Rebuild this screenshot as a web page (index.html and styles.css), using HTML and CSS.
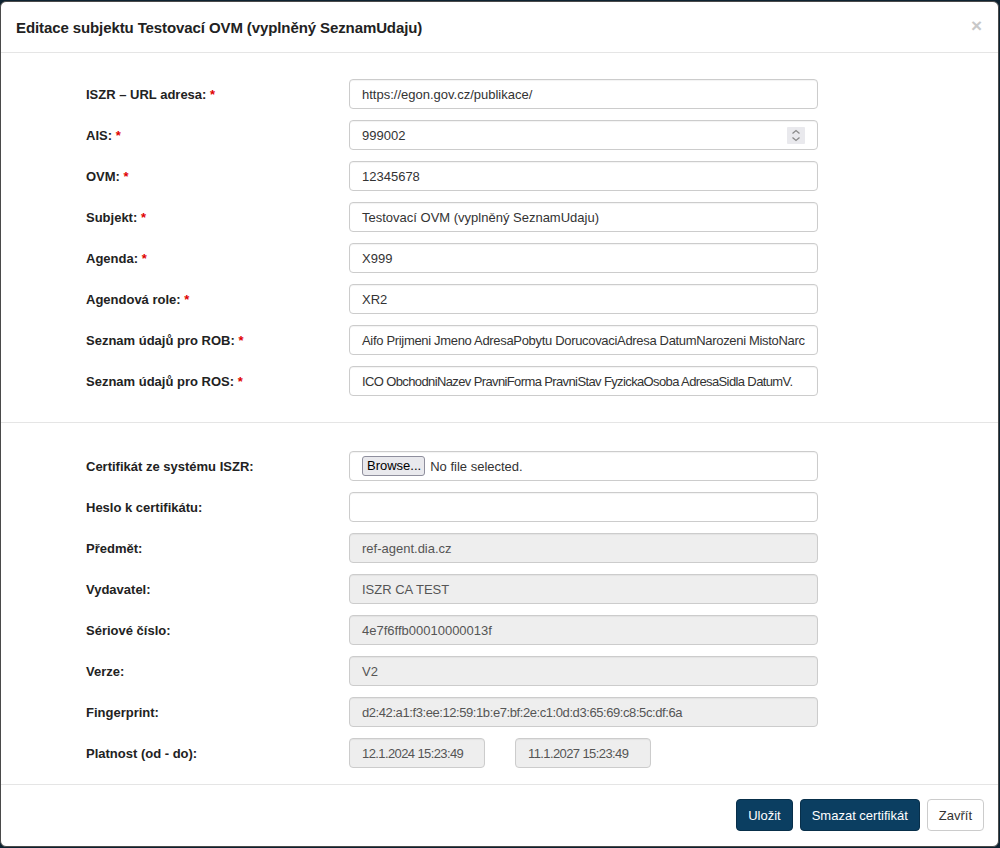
FILE: index.html
```html
<!DOCTYPE html>
<html lang="cs">
<head>
<meta charset="utf-8">
<title>Editace subjektu</title>
<link rel="stylesheet" href="styles.css">
</head>
<body>
<div class="modal">
  <div class="modal-header">
    <h4 class="modal-title">Editace subjektu Testovací OVM (vyplněný SeznamUdaju)</h4>
    <span class="close">×</span>
  </div>
  <div class="section section-main">
    <div class="form-grid">
      <label class="lbl">ISZR – URL adresa: <span class="req">*</span></label>
      <div class="inp">https://egon.gov.cz/publikace/</div>

      <label class="lbl">AIS: <span class="req">*</span></label>
      <div class="inp inp-number">
        <span class="val">999002</span>
        <span class="spin">
          <svg width="18" height="17" viewBox="0 0 18 17"><path d="M5.5 6.5 9 3.5 12.5 6.5" fill="none" stroke="#8a8a8a" stroke-width="1.3"/><path d="M5.5 10.5 9 13.5 12.5 10.5" fill="none" stroke="#8a8a8a" stroke-width="1.3"/></svg>
        </span>
      </div>

      <label class="lbl">OVM: <span class="req">*</span></label>
      <div class="inp">12345678</div>

      <label class="lbl">Subjekt: <span class="req">*</span></label>
      <div class="inp">Testovací OVM (vyplněný SeznamUdaju)</div>

      <label class="lbl">Agenda: <span class="req">*</span></label>
      <div class="inp">X999</div>

      <label class="lbl">Agendová role: <span class="req">*</span></label>
      <div class="inp">XR2</div>

      <label class="lbl">Seznam údajů pro ROB: <span class="req">*</span></label>
      <div class="inp"><span class="clip clip-rob">Aifo Prijmeni Jmeno AdresaPobytu DorucovaciAdresa DatumNarozeni MistoNarc</span></div>

      <label class="lbl">Seznam údajů pro ROS: <span class="req">*</span></label>
      <div class="inp"><span class="clip clip-ros">ICO ObchodniNazev PravniForma PravniStav FyzickaOsoba AdresaSidla DatumV.</span></div>
    </div>
  </div>
  <div class="section section-cert">
    <div class="form-grid">
      <label class="lbl">Certifikát ze systému ISZR:</label>
      <div class="inp inp-file"><span class="browse">Browse...</span><span class="nofile">No file selected.</span></div>

      <label class="lbl">Heslo k certifikátu:</label>
      <div class="inp"></div>

      <label class="lbl">Předmět:</label>
      <div class="inp ro">ref-agent.dia.cz</div>

      <label class="lbl">Vydavatel:</label>
      <div class="inp ro">ISZR CA TEST</div>

      <label class="lbl">Sériové číslo:</label>
      <div class="inp ro">4e7f6ffb00010000013f</div>

      <label class="lbl">Verze:</label>
      <div class="inp ro">V2</div>

      <label class="lbl">Fingerprint:</label>
      <div class="inp ro tight">d2:42:a1:f3:ee:12:59:1b:e7:bf:2e:c1:0d:d3:65:69:c8:5c:df:6a</div>

      <label class="lbl">Platnost (od - do):</label>
      <div class="pair">
        <div class="inp ro short tighter">12.1.2024 15:23:49</div>
        <div class="inp ro short tighter">11.1.2027 15:23:49</div>
      </div>
    </div>
  </div>
  <div class="modal-footer">
    <button class="btn btn-primary">Uložit</button>
    <button class="btn btn-primary">Smazat certifikát</button>
    <button class="btn btn-default">Zavřít</button>
  </div>
</div>
</body>
</html>
```

FILE: styles.css
```css
html, body {
  margin: 0;
  padding: 0;
}
body {
  background: #0d2230;
  font-family: "Liberation Sans", Arial, sans-serif;
  font-size: 13px;
  color: #333;
  padding-top: 1px;
  height: 848px;
  box-sizing: border-box;
  overflow: hidden;
}
.modal {
  width: 999px;
  height: 846px;
  box-sizing: border-box;
  background: #fff;
  border: 1px solid #4a4a4a;
  border-radius: 6px;
  display: flex;
  flex-direction: column;
}
.modal-header {
  height: 50px;
  border-bottom: 1px solid #e5e5e5;
  display: flex;
  align-items: center;
  justify-content: space-between;
  padding: 0 16px 0 15px;
}
.modal-title {
  margin: 0;
  font-size: 15px;
  font-weight: bold;
  color: #222;
  letter-spacing: -0.1px;
}
.close {
  font-size: 19px;
  font-weight: bold;
  color: #c8c8c8;
  line-height: 1;
  margin-top: -4px;
}
.section {
  padding-left: 85px;
}
.section-main {
  padding-top: 26px;
  padding-bottom: 26px;
  border-bottom: 1px solid #e5e5e5;
}
.section-cert {
  padding-top: 28px;
  padding-bottom: 16px;
  border-bottom: 1px solid #e5e5e5;
}
.form-grid {
  display: grid;
  grid-template-columns: 263px 469px;
  row-gap: 11px;
  align-items: center;
}
.lbl {
  font-weight: bold;
  color: #222;
  font-size: 13px;
}
.req {
  color: #e00000;
}
.inp {
  height: 30px;
  box-sizing: border-box;
  border: 1px solid #ccc;
  border-radius: 4px;
  padding: 0 12px;
  display: flex;
  align-items: center;
  color: #333;
  font-size: 13px;
  white-space: nowrap;
  overflow: hidden;
  box-shadow: inset 0 1px 1px rgba(0,0,0,0.05);
}
.clip {
  white-space: nowrap;
  display: block;
}
.clip-rob {
  letter-spacing: -0.32px;
}
.clip-ros {
  letter-spacing: -0.62px;
}
.tight {
  letter-spacing: -0.42px;
}
.tighter {
  letter-spacing: -0.6px;
}
.inp-number {
  justify-content: space-between;
  padding-right: 12px;
}
.spin {
  width: 18px;
  height: 17px;
  background: #e9e9ed;
  display: flex;
  border-radius: 1px;
}
.inp-file {
  gap: 5px;
}
.browse {
  border: 1px solid #8f8f9d;
  background: #e9e9ed;
  border-radius: 3px;
  color: #000;
  padding: 1px 3px 2px 4px;
  font-size: 13px;
  line-height: 15px;
}
.nofile {
  color: #333;
}
.ro {
  background: #eeeeee;
  color: #555;
}
.pair {
  display: flex;
  gap: 30px;
}
.short {
  width: 136px;
}
.modal-footer {
  flex: 1;
  display: flex;
  justify-content: flex-end;
  align-items: flex-start;
  gap: 7px;
  padding: 14px 14px 0 0;
}
.btn {
  height: 32px;
  font-family: "Liberation Sans", Arial, sans-serif;
  font-size: 13px;
  border-radius: 4px;
  padding: 0 11px;
  cursor: pointer;
}
.btn-primary {
  background: #0b3e61;
  border: 1px solid #082f4a;
  color: #fff;
}
.btn-default {
  background: #fff;
  border: 1px solid #ccc;
  color: #333;
}
```
